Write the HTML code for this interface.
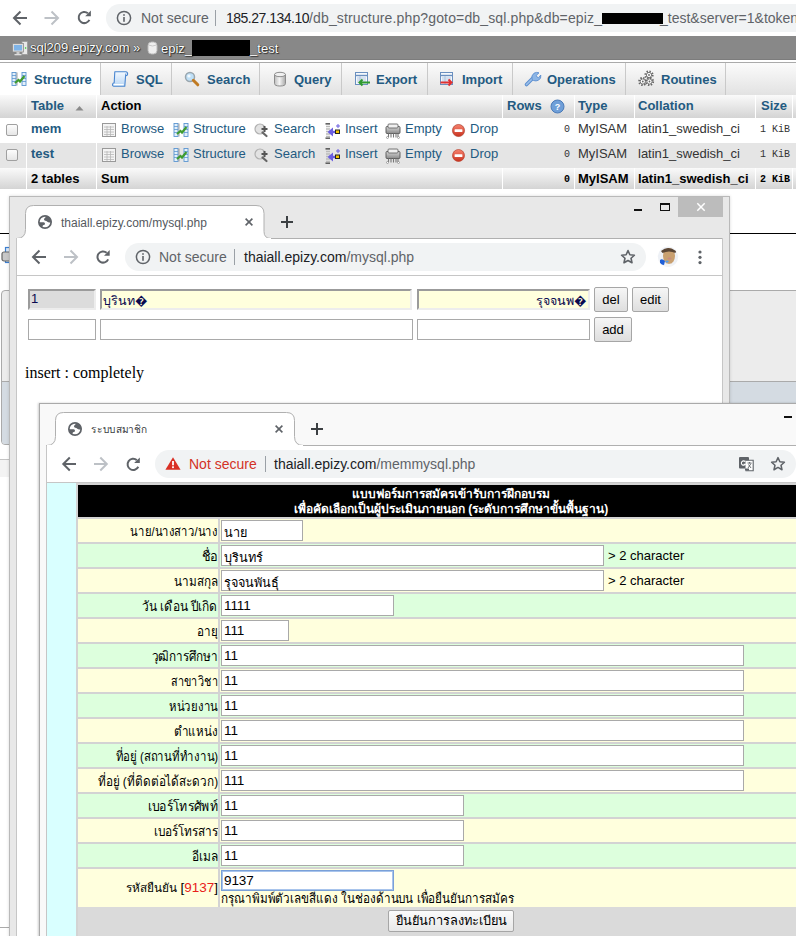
<!DOCTYPE html>
<html><head><meta charset="utf-8">
<style>
*{box-sizing:border-box;margin:0;padding:0}
html,body{width:796px;height:936px;overflow:hidden;background:#fff;font-family:"Liberation Sans",sans-serif;position:relative}
.a{position:absolute}
.t{position:absolute;white-space:nowrap;line-height:16px}
svg{position:absolute;overflow:visible}
.pill{position:absolute;background:#f1f3f4;border-radius:15px}
.lnk{color:#235a81}
.tab{position:absolute;top:0;height:32px;border-right:1px solid #c9c9c9;color:#235a81;font-size:13px;font-weight:bold}
.th{position:absolute;top:0;height:23px;border-right:1px solid #fff;font-size:13px;font-weight:bold;color:#000}
.row{position:absolute;left:0;width:796px;height:25px;font-size:13px}
.mono{font-family:"Liberation Mono",monospace;font-size:10px}
.inp{position:absolute;background:#fff;border:1px solid #a9a9a9;font-size:13px;line-height:18px;padding-left:2px;white-space:nowrap;overflow:hidden}
.btn{position:absolute;background:linear-gradient(#f6f6f6,#dedede);border:1px solid #a6a6a6;border-radius:2px;font-size:13px;text-align:center;line-height:24px;color:#000}
.fr{position:absolute;left:77px;width:760px;height:23px}
.lab{position:absolute;right:578px;top:3px;font-size:12px;white-space:nowrap;text-align:right}
.fi{position:absolute;left:221px;background:#fff;border:1px solid #a9a9a9;height:21px;font-size:13.5px;letter-spacing:-0.1px;line-height:19px;padding-left:2px;white-space:nowrap}
.th3{font-size:11.8px;line-height:16px;color:#000}
.y{background:#ffffdd}.g{background:#ddffdd}
</style></head><body>

<!-- ============ WINDOW 1 : phpMyAdmin ============ -->
<div class="a" style="left:0;top:0;width:796px;height:36px;background:#fff">
  <svg style="left:0;top:0" width="110" height="36" viewBox="0 0 110 36">
    <g fill="none" stroke="#5f6368" stroke-width="2"><path d="M27 18H14.5M20.5 11.5L14 18L20.5 24.5"/></g>
    <g fill="none" stroke="#bdc1c6" stroke-width="2"><path d="M44.5 18H57.5M51.5 11.5L58 18L51.5 24.5"/></g>
    <g fill="none" stroke="#5f6368" stroke-width="2"><path d="M87.90 13.21A5.6 5.6 0 1 0 89.38 19.87"/></g>
    <path d="M90.90 10.50L90.90 16.20L85.20 16.20Z" fill="#5f6368"/>
  </svg>
  <div class="pill" style="left:106px;top:4px;width:720px;height:28px;border-radius:14px"></div>
  <svg style="left:116px;top:10px" width="16" height="16" viewBox="0 0 16 16"><circle cx="8" cy="8" r="6.6" fill="none" stroke="#5f6368" stroke-width="1.5"/><rect x="7.2" y="7" width="1.6" height="4.8" fill="#5f6368"/><rect x="7.2" y="4.2" width="1.6" height="1.6" fill="#5f6368"/></svg>
  <div class="t" style="left:141px;top:10px;font-size:14px;color:#5f6368">Not secure</div>
  <div class="a" style="left:215px;top:10px;width:1px;height:16px;background:#9aa0a6"></div>
  <div class="t" style="left:226px;top:10px;font-size:14px;color:#202124;letter-spacing:-0.5px">185.27.134.10</div>
  <div class="t" style="left:309px;top:10px;font-size:14px;color:#5f6368;letter-spacing:0.14px">/db_structure.php?goto=db_sql.php&amp;db=epiz_</div>
  <div class="a" style="left:602px;top:13px;width:61px;height:11px;background:#000"></div>
  <div class="t" style="left:660px;top:10px;font-size:14px;color:#5f6368">_test&amp;server=1&amp;token</div>
</div>

<div class="a" style="left:0;top:36px;width:796px;height:24px;background:#888;border-bottom:1px solid #7c7c7c;color:#fff;font-size:13px;text-shadow:0 0 1px #000,1px 1px 1px #333">
  <svg style="left:12px;top:5px" width="16" height="16" viewBox="0 0 16 16"><rect x="10" y="0.5" width="5.5" height="13" fill="#e8e8e8" stroke="#9a9a9a" stroke-width=".8"/><circle cx="13.6" cy="7" r=".8" fill="#2c2"/><rect x="0.5" y="2.5" width="11" height="8.5" fill="#dcdcdc" stroke="#8c8c8c" stroke-width=".8"/><rect x="2" y="4" width="8" height="5.5" fill="#7fb4e8"/><rect x="4.5" y="11" width="3" height="2" fill="#ccc"/><rect x="2.5" y="13" width="7" height="1.3" fill="#ddd"/></svg>
  <div class="t" style="left:30px;top:4px">sql209.epizy.com »</div>
  <svg style="left:147px;top:5px" width="11" height="14" viewBox="0 0 11 14"><rect x="1" y="1" width="9" height="12" rx="3.5" fill="#eee" stroke="#b8b8b8"/><path d="M1.5 4Q5.5 6 9.5 4" fill="none" stroke="#c8c8c8"/></svg>
  <div class="t" style="left:161px;top:4px">epiz_<span style="display:inline-block;width:58px;height:16px;background:#000;vertical-align:-3px"></span>_test</div>
</div>
<div class="a" style="left:0;top:60px;width:796px;height:2px;background:#fff"></div>

<div class="a" style="left:0;top:62px;width:796px;height:33px;background:linear-gradient(#fbfbfb,#e2e2e2);border-top:1px solid #aaa">
  <div class="tab" style="left:0;width:101px;background:#fff;height:32px"></div>
  <div class="tab" style="left:100px;width:72px"></div>
  <div class="tab" style="left:171px;width:89px"></div>
  <div class="tab" style="left:259px;width:83px"></div>
  <div class="tab" style="left:341px;width:87px"></div>
  <div class="tab" style="left:427px;width:86px"></div>
  <div class="tab" style="left:512px;width:114px"></div>
  <div class="tab" style="left:625px;width:101px"></div>
  <div class="t" style="left:34px;top:9px;font-size:13px;font-weight:bold;color:#235a81">Structure</div>
  <div class="t" style="left:136px;top:9px;font-size:13px;font-weight:bold;color:#235a81">SQL</div>
  <div class="t" style="left:207px;top:9px;font-size:13px;font-weight:bold;color:#235a81">Search</div>
  <div class="t" style="left:294px;top:9px;font-size:13px;font-weight:bold;color:#235a81">Query</div>
  <div class="t" style="left:376px;top:9px;font-size:13px;font-weight:bold;color:#235a81">Export</div>
  <div class="t" style="left:462px;top:9px;font-size:13px;font-weight:bold;color:#235a81">Import</div>
  <div class="t" style="left:547px;top:9px;font-size:13px;font-weight:bold;color:#235a81">Operations</div>
  <div class="t" style="left:661px;top:9px;font-size:13px;font-weight:bold;color:#235a81">Routines</div>
  <!-- tab icons -->
  <svg style="left:11px;top:8px" width="16" height="16" viewBox="0 0 16 16"><rect x="1" y="1.5" width="4" height="13" fill="#e4f0fa" stroke="#5b95d0" stroke-width=".9"/><path d="M1 4.5H5M1 7.5H5M1 10.5H5" stroke="#5b95d0" stroke-width=".8"/><rect x="11" y="1.5" width="4" height="13" fill="#e4f0fa" stroke="#5b95d0" stroke-width=".9"/><path d="M11 4.5H15M11 7.5H15M11 10.5H15" stroke="#5b95d0" stroke-width=".8"/><path d="M6 1.5V14.5" stroke="#8a8a8a" stroke-width=".8"/><path d="M4 12L7.5 9L9 10.5L13.5 5" fill="none" stroke="#3f9b2f" stroke-width="2.2"/></svg>
  <svg style="left:112px;top:8px" width="17" height="17" viewBox="0 0 17 17"><defs><linearGradient id="sqg" x1="0" y1="0" x2="0" y2="1"><stop offset="0" stop-color="#f4f9ff"/><stop offset="1" stop-color="#b8d6f4"/></linearGradient></defs><path d="M2.8 0.8L13.8 0.8Q15.8 1 15.6 3.2Q15.4 4.8 13.6 4.6L12.8 15.2L1.6 15.2Q0.2 15 0.6 13.2Q1 11.8 2.2 11.8Z" fill="url(#sqg)" stroke="#4a86d0" stroke-width="1.1" stroke-linejoin="round"/><path d="M1.8 12.9H11.7L11.5 14.3H1.5Z" fill="#fff"/><path d="M13.6 4.6L13.8 2.5" stroke="#4a86d0" stroke-width=".9"/></svg>
  <svg style="left:184px;top:8px" width="16" height="16" viewBox="0 0 16 16"><circle cx="6" cy="6" r="4.5" fill="#bfe0f7" stroke="#9aa6ae" stroke-width="1.5"/><circle cx="5" cy="5" r="1.6" fill="#f2f9ff"/><path d="M9.3 9.3L13.8 13.8" stroke="#c07a22" stroke-width="3" stroke-linecap="round"/></svg>
  <svg style="left:273px;top:8px" width="14" height="16" viewBox="0 0 14 16"><defs><linearGradient id="cyl" x1="0" x2="1"><stop offset="0" stop-color="#bdbdbd"/><stop offset=".45" stop-color="#f4f4f4"/><stop offset="1" stop-color="#a8a8a8"/></linearGradient></defs><path d="M1.5 3.5V12.5Q1.5 15 7 15Q12.5 15 12.5 12.5V3.5" fill="url(#cyl)" stroke="#8c8c8c"/><ellipse cx="7" cy="3.5" rx="5.5" ry="2.2" fill="#f0f0f0" stroke="#8c8c8c"/></svg>
  <svg style="left:354px;top:8px" width="17" height="16" viewBox="0 0 17 16"><rect x="1.5" y="1.5" width="12" height="12" fill="#f4f8fc" stroke="#6a8fbf"/><path d="M1.5 4.5H13.5" stroke="#6a8fbf" stroke-width="1.4"/><path d="M3 7H12M3 9H12M3 11H12M6 5V13" stroke="#9bb5d6" stroke-width=".7"/><path d="M16 11.5H5.5M8.5 8.5L5.5 11.5L8.5 14.5" fill="none" stroke="#2f9a2f" stroke-width="2"/></svg>
  <svg style="left:439px;top:8px" width="17" height="16" viewBox="0 0 17 16"><rect x="1.5" y="1.5" width="12" height="12" fill="#f4f8fc" stroke="#6a8fbf"/><path d="M1.5 4.5H13.5" stroke="#6a8fbf" stroke-width="1.4"/><path d="M3 7H12M3 9H12M3 11H12M6 5V13" stroke="#9bb5d6" stroke-width=".7"/><path d="M1.5 11.5H12.5M9.5 8.5L12.5 11.5L9.5 14.5" fill="none" stroke="#e03030" stroke-width="2"/></svg>
  <svg style="left:524px;top:8px" width="17" height="16" viewBox="0 0 17 16"><path d="M2.5 13.5L9 7" stroke="#5d8fcf" stroke-width="3.6" stroke-linecap="round"/><path d="M2.5 13.5L9 7" stroke="#9cc0ea" stroke-width="1.6" stroke-linecap="round"/><path d="M8 8.5Q7 4.5 10 2.2Q12.5 0.8 15 1.8L12.2 4.5L13 6L14.5 6.8L16.8 4Q17.5 7.5 14.5 9.2Q12 10.5 9.5 9.5Z" fill="#8db6e6" stroke="#5d8fcf" stroke-width=".9"/></svg>
  <svg style="left:638px;top:7px" width="17" height="17" viewBox="0 0 17 17"><circle cx="11" cy="5" r="3.6" fill="#fff" stroke="#666" stroke-width="2" stroke-dasharray="1.4 1.42"/><circle cx="11" cy="5" r="2.6" fill="#fff" stroke="#666" stroke-width=".9"/><circle cx="11" cy="5" r="0.9" fill="#666"/><circle cx="4.8" cy="11.5" r="3.6" fill="#fff" stroke="#666" stroke-width="2" stroke-dasharray="1.4 1.42"/><circle cx="4.8" cy="11.5" r="2.6" fill="#fff" stroke="#666" stroke-width=".9"/><circle cx="4.8" cy="11.5" r="0.9" fill="#666"/><circle cx="11.5" cy="11.5" r="3.6" fill="#fff" stroke="#666" stroke-width="2" stroke-dasharray="1.4 1.42"/><circle cx="11.5" cy="11.5" r="2.6" fill="#fff" stroke="#666" stroke-width=".9"/><circle cx="11.5" cy="11.5" r="0.9" fill="#666"/></svg>
</div>

<!-- table -->
<div class="a" style="left:0;top:95px;width:796px;height:23px;background:linear-gradient(#fafafa,#d4d4d4)">
  <div class="th" style="left:0;width:27px"></div>
  <div class="th" style="left:26px;width:71px"></div>
  <div class="th" style="left:96px;width:407px"></div>
  <div class="th" style="left:502px;width:73px"></div>
  <div class="th" style="left:574px;width:61px"></div>
  <div class="th" style="left:634px;width:122px"></div>
  <div class="th" style="left:755px;width:38px"></div>
  <div class="t" style="left:31px;top:3px;font-size:13px;font-weight:bold;color:#235a81">Table</div>
  <svg style="left:75px;top:10px" width="9" height="6" viewBox="0 0 9 6"><path d="M0.5 5.5L4.5 1L8.5 5.5Z" fill="#8a8a8a"/></svg>
  <div class="t" style="left:101px;top:3px;font-size:13px;font-weight:bold;color:#000">Action</div>
  <div class="t" style="left:507px;top:3px;font-size:13px;font-weight:bold;color:#235a81">Rows</div>
  <svg style="left:550px;top:4px" width="15" height="15" viewBox="0 0 15 15"><circle cx="7.5" cy="7.5" r="6.5" fill="#6f9fd8" stroke="#4a7ab8"/><text x="7.5" y="11" font-size="9" font-weight="bold" text-anchor="middle" fill="#fff" font-family="Liberation Sans">?</text></svg>
  <div class="t" style="left:578px;top:3px;font-size:13px;font-weight:bold;color:#235a81">Type</div>
  <div class="t" style="left:638px;top:3px;font-size:13px;font-weight:bold;color:#235a81">Collation</div>
  <div class="t" style="left:761px;top:3px;font-size:13px;font-weight:bold;color:#235a81">Size</div>
</div>

<div class="row" style="top:118px;background:#fff"></div>
<div class="row" style="top:143px;background:#e5e5e5"></div>
<div class="row" style="top:168px;height:21px;background:linear-gradient(#fafafa,#d4d4d4)"></div>
<!-- column separators in rows -->
<div class="a" style="left:26px;top:118px;width:1px;height:71px;background:#fff"></div>
<div class="a" style="left:96px;top:118px;width:1px;height:71px;background:#fff"></div>
<div class="a" style="left:502px;top:168px;width:1px;height:21px;background:#fff"></div>
<div class="a" style="left:574px;top:168px;width:1px;height:21px;background:#fff"></div>
<div class="a" style="left:634px;top:168px;width:1px;height:21px;background:#fff"></div>
<div class="a" style="left:755px;top:168px;width:1px;height:21px;background:#fff"></div>
<div class="a" style="left:792px;top:168px;width:1px;height:21px;background:#fff"></div>

<div class="a" style="left:0;top:118px;width:796px;height:25px">
  <div class="a" style="left:6px;top:6px;width:12px;height:12px;border:1px solid #a0a0a0;border-radius:2px;background:linear-gradient(#fdfdfd,#e6e6e6)"></div>
  <div class="t" style="left:31px;top:3px;font-size:13px;font-weight:bold;color:#235a81">mem</div>
  <svg style="left:102px;top:5px" width="14" height="14" viewBox="0 0 14 14"><rect x=".5" y=".5" width="13" height="13" fill="#f4f4f4" stroke="#999"/><path d="M2 4H12M2 6.5H12M2 9H12M2 11.5H12M5 3V13M8.5 3V13" stroke="#b8b8b8" stroke-width=".8"/></svg>
  <div class="t lnk" style="left:121px;top:3px;font-size:13px">Browse</div>
  <svg style="left:173px;top:4px" width="16" height="16" viewBox="0 0 16 16"><rect x="1" y="1.5" width="4" height="13" fill="#e4f0fa" stroke="#5b95d0" stroke-width=".9"/><path d="M1 4.5H5M1 7.5H5M1 10.5H5" stroke="#5b95d0" stroke-width=".8"/><rect x="11" y="1.5" width="4" height="13" fill="#e4f0fa" stroke="#5b95d0" stroke-width=".9"/><path d="M11 4.5H15M11 7.5H15M11 10.5H15" stroke="#5b95d0" stroke-width=".8"/><path d="M6 1.5V14.5" stroke="#8a8a8a" stroke-width=".8"/><path d="M4 12L7.5 9L9 10.5L13.5 5" fill="none" stroke="#3f9b2f" stroke-width="2.2"/></svg>
  <div class="t lnk" style="left:193px;top:3px;font-size:13px">Structure</div>
  <svg style="left:254px;top:5px" width="15" height="14" viewBox="0 0 15 14"><circle cx="6" cy="6" r="5" fill="#e2e2e2" stroke="#b0b0b0" stroke-width="1.2"/><path d="M8.5 9.5L12.5 13" stroke="#666" stroke-width="2.2" stroke-linecap="round"/><path d="M10.5 3V9M7.5 6H13.5" stroke="#555" stroke-width="2"/></svg>
  <div class="t lnk" style="left:274px;top:3px;font-size:13px">Search</div>
  <svg style="left:325px;top:5px" width="16" height="16" viewBox="0 0 16 16"><path d="M0.5 0.8H5M0.5 15.2H5" stroke="#333" stroke-width="1.2"/><path d="M1 3.5H5M1 6H5M1 8.5H5M1 11H5M1 13.5H5" stroke="#bbb" stroke-width="1.3"/><path d="M4 9H11" stroke="#6b5ee0" stroke-width="2.4"/><path d="M2.5 9L8 4.5V13.5Z" fill="#6b5ee0"/><rect x="10.5" y="7" width="4" height="3.5" fill="#f5c400" stroke="#222" stroke-width="1"/><path d="M13 1V5M11 3H15" stroke="#6b5ee0" stroke-width="1"/></svg>
  <div class="t lnk" style="left:345px;top:3px;font-size:13px">Insert</div>
  <svg style="left:385px;top:5px" width="16" height="16" viewBox="0 0 16 16"><defs><linearGradient id="shg" x1="0" y1="0" x2="0" y2="1"><stop offset="0" stop-color="#d8d8d8"/><stop offset="1" stop-color="#8a8a8a"/></linearGradient></defs><rect x="1" y="3.5" width="14" height="7" rx="1" fill="url(#shg)" stroke="#555" stroke-width=".9"/><rect x="3" y="1" width="10" height="4" rx="1" fill="#f0f0f0" stroke="#666" stroke-width=".9"/><path d="M3.5 10.5V14M6 10.5V14.5M8.5 10.5V14.5M11 10.5V14.5M13 10.5V14" stroke="#777" stroke-width="1.1"/><circle cx="2.5" cy="14.5" r="1" fill="#fff" stroke="#777" stroke-width=".6"/><circle cx="13.5" cy="14.5" r="1" fill="#fff" stroke="#777" stroke-width=".6"/></svg>
  <div class="t lnk" style="left:405px;top:3px;font-size:13px">Empty</div>
  <svg style="left:451px;top:5px" width="15" height="15" viewBox="0 0 15 15"><defs><linearGradient id="drg" x1="0" y1="0" x2="0" y2="1"><stop offset="0" stop-color="#f7836f"/><stop offset="1" stop-color="#c8321f"/></linearGradient></defs><circle cx="7.5" cy="7.5" r="6.8" fill="#e9e9e9"/><circle cx="7.5" cy="7.5" r="6" fill="url(#drg)" stroke="#b8402e" stroke-width=".7"/><rect x="3.6" y="6.2" width="7.8" height="2.7" rx=".5" fill="#fff"/></svg>
  <div class="t lnk" style="left:470px;top:3px;font-size:13px">Drop</div>
  <div class="t mono" style="left:564px;top:3.5px;color:#333">0</div>
  <div class="t" style="left:578px;top:3px;font-size:13px;color:#333">MyISAM</div>
  <div class="t" style="left:638px;top:3px;font-size:13px;color:#333">latin1_swedish_ci</div>
  <div class="t mono" style="left:760px;top:3.5px;color:#333">1 KiB</div>
</div>
<div class="a" style="left:0;top:143px;width:796px;height:25px">
  <div class="a" style="left:6px;top:6px;width:12px;height:12px;border:1px solid #a0a0a0;border-radius:2px;background:linear-gradient(#fdfdfd,#e6e6e6)"></div>
  <div class="t" style="left:31px;top:3px;font-size:13px;font-weight:bold;color:#235a81">test</div>
  <svg style="left:102px;top:5px" width="14" height="14" viewBox="0 0 14 14"><rect x=".5" y=".5" width="13" height="13" fill="#f4f4f4" stroke="#999"/><path d="M2 4H12M2 6.5H12M2 9H12M2 11.5H12M5 3V13M8.5 3V13" stroke="#b8b8b8" stroke-width=".8"/></svg>
  <div class="t lnk" style="left:121px;top:3px;font-size:13px">Browse</div>
  <svg style="left:173px;top:4px" width="16" height="16" viewBox="0 0 16 16"><rect x="1" y="1.5" width="4" height="13" fill="#e4f0fa" stroke="#5b95d0" stroke-width=".9"/><path d="M1 4.5H5M1 7.5H5M1 10.5H5" stroke="#5b95d0" stroke-width=".8"/><rect x="11" y="1.5" width="4" height="13" fill="#e4f0fa" stroke="#5b95d0" stroke-width=".9"/><path d="M11 4.5H15M11 7.5H15M11 10.5H15" stroke="#5b95d0" stroke-width=".8"/><path d="M6 1.5V14.5" stroke="#8a8a8a" stroke-width=".8"/><path d="M4 12L7.5 9L9 10.5L13.5 5" fill="none" stroke="#3f9b2f" stroke-width="2.2"/></svg>
  <div class="t lnk" style="left:193px;top:3px;font-size:13px">Structure</div>
  <svg style="left:254px;top:5px" width="15" height="14" viewBox="0 0 15 14"><circle cx="6" cy="6" r="5" fill="#e2e2e2" stroke="#b0b0b0" stroke-width="1.2"/><path d="M8.5 9.5L12.5 13" stroke="#666" stroke-width="2.2" stroke-linecap="round"/><path d="M10.5 3V9M7.5 6H13.5" stroke="#555" stroke-width="2"/></svg>
  <div class="t lnk" style="left:274px;top:3px;font-size:13px">Search</div>
  <svg style="left:325px;top:5px" width="16" height="16" viewBox="0 0 16 16"><path d="M0.5 0.8H5M0.5 15.2H5" stroke="#333" stroke-width="1.2"/><path d="M1 3.5H5M1 6H5M1 8.5H5M1 11H5M1 13.5H5" stroke="#bbb" stroke-width="1.3"/><path d="M4 9H11" stroke="#6b5ee0" stroke-width="2.4"/><path d="M2.5 9L8 4.5V13.5Z" fill="#6b5ee0"/><rect x="10.5" y="7" width="4" height="3.5" fill="#f5c400" stroke="#222" stroke-width="1"/><path d="M13 1V5M11 3H15" stroke="#6b5ee0" stroke-width="1"/></svg>
  <div class="t lnk" style="left:345px;top:3px;font-size:13px">Insert</div>
  <svg style="left:385px;top:5px" width="16" height="16" viewBox="0 0 16 16"><defs><linearGradient id="shg" x1="0" y1="0" x2="0" y2="1"><stop offset="0" stop-color="#d8d8d8"/><stop offset="1" stop-color="#8a8a8a"/></linearGradient></defs><rect x="1" y="3.5" width="14" height="7" rx="1" fill="url(#shg)" stroke="#555" stroke-width=".9"/><rect x="3" y="1" width="10" height="4" rx="1" fill="#f0f0f0" stroke="#666" stroke-width=".9"/><path d="M3.5 10.5V14M6 10.5V14.5M8.5 10.5V14.5M11 10.5V14.5M13 10.5V14" stroke="#777" stroke-width="1.1"/><circle cx="2.5" cy="14.5" r="1" fill="#fff" stroke="#777" stroke-width=".6"/><circle cx="13.5" cy="14.5" r="1" fill="#fff" stroke="#777" stroke-width=".6"/></svg>
  <div class="t lnk" style="left:405px;top:3px;font-size:13px">Empty</div>
  <svg style="left:451px;top:5px" width="15" height="15" viewBox="0 0 15 15"><defs><linearGradient id="drg" x1="0" y1="0" x2="0" y2="1"><stop offset="0" stop-color="#f7836f"/><stop offset="1" stop-color="#c8321f"/></linearGradient></defs><circle cx="7.5" cy="7.5" r="6.8" fill="#e9e9e9"/><circle cx="7.5" cy="7.5" r="6" fill="url(#drg)" stroke="#b8402e" stroke-width=".7"/><rect x="3.6" y="6.2" width="7.8" height="2.7" rx=".5" fill="#fff"/></svg>
  <div class="t lnk" style="left:470px;top:3px;font-size:13px">Drop</div>
  <div class="t mono" style="left:564px;top:3.5px;color:#333">0</div>
  <div class="t" style="left:578px;top:3px;font-size:13px;color:#333">MyISAM</div>
  <div class="t" style="left:638px;top:3px;font-size:13px;color:#333">latin1_swedish_ci</div>
  <div class="t mono" style="left:760px;top:3.5px;color:#333">1 KiB</div>
</div>
<div class="a" style="left:0;top:168px;width:796px;height:21px">
  <div class="t" style="left:31px;top:3px;font-size:13px;font-weight:bold">2 tables</div>
  <div class="t" style="left:101px;top:3px;font-size:13px;font-weight:bold">Sum</div>
  <div class="t mono" style="left:564px;top:4px;font-weight:bold">0</div>
  <div class="t" style="left:578px;top:3px;font-size:13px;font-weight:bold">MyISAM</div>
  <div class="t" style="left:638px;top:3px;font-size:13px;font-weight:bold">latin1_swedish_ci</div>
  <div class="t mono" style="left:760px;top:4px;font-weight:bold">2 KiB</div>
</div>


<!-- background page below table -->
<div class="a" style="left:0;top:233px;width:796px;height:1px;background:#000;box-shadow:0 0 0.6px #000"></div>
<div class="a" style="left:700px;top:290px;width:96px;height:91px;background:#ececec;border-top:1px solid #aaa"></div>
<div class="a" style="left:700px;top:381px;width:96px;height:22px;background:#d4dbe2;border-top:1px solid #aaa"></div>
<div class="a" style="left:1px;top:290px;width:20px;height:155px;background:#ececec;border:1px solid #aaa;border-radius:4px;overflow:hidden"><div class="a" style="left:0;top:90px;width:20px;height:70px;background:#d4dbe2;border-top:1px solid #aaa"></div></div>
<div class="a" style="left:0;top:459px;width:20px;height:18px;background:#f3f3f3;border-top:1px solid #c4c4c4"></div>
<div class="a" style="left:0;top:927px;width:20px;height:1px;background:#aaa"></div>
<svg style="left:1px;top:246px" width="12" height="18" viewBox="0 0 12 18"><rect x="4.5" y="1.5" width="7" height="15" fill="#dbe9f9" stroke="#3d7fd0" stroke-width="1.2"/><rect x="1" y="6" width="10" height="9" rx="2" fill="#c8c8c8" stroke="#666" stroke-width="1.2"/></svg>

<!-- ============ WINDOW 2 ============ -->
<div class="a" style="left:9px;top:196px;width:721px;height:760px;background:#e8e8e8;border:1px solid #b9b9b9;box-shadow:0 0 3px rgba(0,0,0,.15)"></div>
<!-- tab -->
<svg style="left:9px;top:196px" width="300" height="45" viewBox="0 0 300 45">
  <path d="M7.5 42.5Q16.5 42.5 16.5 33.5V17.5Q16.5 9.5 24.5 9.5H247Q255 9.5 255 17.5V35.5Q255 42.5 262 42.5" fill="#fff" stroke="#b0b0b0" stroke-width="1"/>
  <rect x="8" y="42" width="254" height="4" fill="#fff"/>
</svg>
<div class="a" style="left:16px;top:238px;width:707px;height:720px;background:#fff;border-top:1px solid #b0b0b0"></div>
<div class="a" style="left:16px;top:238px;width:1px;height:720px;background:#c6c6c6"></div>
<div class="a" style="left:722px;top:238px;width:1px;height:720px;background:#c6c6c6"></div>
<div class="a" style="left:17px;top:238px;width:254px;height:3px;background:#fff"></div>
<svg style="left:37px;top:214px" width="16" height="16" viewBox="0 0 16 16"><defs><clipPath id="gl1"><circle cx="8" cy="8" r="6.4"/></clipPath></defs><circle cx="8" cy="8" r="6.15" fill="none" stroke="#5f6368" stroke-width="1.7"/><g clip-path="url(#gl1)" fill="#5f6368"><path d="M8.8 1V3Q7 4 7 5.5Q7 6.6 8.2 6.8Q9.5 7 10.3 7.8Q11 8.6 12.7 8.55H15V1Z"/><path d="M1 8.3H6.6Q8.2 8.5 8 9.9Q7.8 10.7 6.6 10.9Q5.6 11.2 5.5 12.5L5 15H1Z"/></g></svg>
<div class="t" style="left:61px;top:215px;font-size:12px;color:#55595e">thaiall.epizy.com/mysql.php</div>
<svg style="left:245px;top:218px" width="8" height="8" viewBox="0 0 8 8"><path d="M0.6 0.6L7.4 7.4M7.4 0.6L0.6 7.4" stroke="#5f6368" stroke-width="1.6"/></svg>
<svg style="left:281px;top:216px" width="12" height="12" viewBox="0 0 12 12"><path d="M6 0V12M0 6H12" stroke="#3c4043" stroke-width="2"/></svg>
<div class="a" style="left:634px;top:209px;width:8px;height:2px;background:#111"></div>
<div class="a" style="left:660px;top:203px;width:10px;height:8px;border:1px solid #111;border-top-width:2px"></div>
<div class="a" style="left:678px;top:197px;width:45px;height:20px;background:#bcbcbc"></div>
<svg style="left:697px;top:203px" width="8" height="8" viewBox="0 0 8 8"><path d="M0.3 0.3L7.7 7.7M7.7 0.3L0.3 7.7" stroke="#fff" stroke-width="1.5"/></svg>
<!-- toolbar -->
<svg style="left:16px;top:238px" width="110" height="37" viewBox="0 0 110 37">
  <g fill="none" stroke="#5f6368" stroke-width="2"><path d="M30 19H17.5M23.5 12.5L17 19L23.5 25.5"/></g>
  <g fill="none" stroke="#bdc1c6" stroke-width="2"><path d="M48 19H60.5M54.5 12.5L61 19L54.5 25.5"/></g>
  <g fill="none" stroke="#5f6368" stroke-width="2"><path d="M90.70 14.71A5.6 5.6 0 1 0 92.18 21.37"/></g>
  <path d="M93.70 12.00L93.70 17.70L88.00 17.70Z" fill="#5f6368"/>
</svg>
<div class="pill" style="left:125px;top:243px;width:521px;height:28px;border-radius:14px"></div>
<svg style="left:135px;top:249px" width="16" height="16" viewBox="0 0 16 16"><circle cx="8" cy="8" r="6.6" fill="none" stroke="#5f6368" stroke-width="1.5"/><rect x="7.2" y="7" width="1.6" height="4.8" fill="#5f6368"/><rect x="7.2" y="4.2" width="1.6" height="1.6" fill="#5f6368"/></svg>
<div class="t" style="left:159px;top:249px;font-size:14px;color:#5f6368">Not secure</div>
<div class="a" style="left:234px;top:249px;width:1px;height:16px;background:#9aa0a6"></div>
<div class="t" style="left:244px;top:249px;font-size:14px;color:#5f6368"><span style="color:#202124">thaiall.epizy.com</span>/mysql.php</div>
<svg style="left:620px;top:249px" width="16" height="16" viewBox="0 0 18 18"><path d="M9 1.8L11.1 6.5L16.2 7L12.4 10.4L13.5 15.5L9 12.9L4.5 15.5L5.6 10.4L1.8 7L6.9 6.5Z" fill="none" stroke="#5f6368" stroke-width="1.8" stroke-linejoin="round"/></svg>
<svg style="left:657px;top:246px" width="22" height="22" viewBox="0 0 22 22"><defs><clipPath id="av"><circle cx="11" cy="10.7" r="10.2"/></clipPath></defs><g clip-path="url(#av)"><rect width="22" height="22" fill="#eef1f6"/><ellipse cx="12" cy="10" rx="6" ry="8" fill="#c9a070"/><path d="M4 5Q11 -1 19 5L18.5 7Q12 4 5.5 7Z" fill="#5a4636"/><ellipse cx="12.5" cy="12.5" rx="2" ry="1" fill="#c98a80"/><path d="M3 14Q5 12 8 15L7 19Q4 19 3 17Z" fill="#1f5fd8"/><path d="M8 15Q10 14 12 15L10 17Z" fill="#5aa0e8"/><path d="M5 22Q8 17 12 18Q16 17 19 22Z" fill="#f4f4f4"/></g></svg>
<svg style="left:698px;top:250px" width="4" height="14" viewBox="0 0 4 14"><circle cx="2" cy="2" r="1.6" fill="#5f6368"/><circle cx="2" cy="7.3" r="1.6" fill="#5f6368"/><circle cx="2" cy="12.6" r="1.6" fill="#5f6368"/></svg>
<div class="a" style="left:17px;top:275px;width:705px;height:1px;background:#c6c6c6"></div>
<!-- content -->
<div class="inp" style="left:28px;top:289px;width:68px;height:21px;background:#dcdcdc;border:2px solid;border-color:#9b9b9b #ededed #ededed #9b9b9b;color:#0a0a50;line-height:16px;padding-left:1px">1</div>
<div class="inp" style="left:100px;top:289px;width:312px;height:21px;background:#ffffdd;border:2px solid;border-color:#9b9b9b #ededed #ededed #9b9b9b;color:#0a0a50;line-height:17px;padding-left:1px;padding-top:2px;font-size:12.5px">บุรินท�</div>
<div class="inp" style="left:417px;top:289px;width:173px;height:21px;background:#ffffdd;border:2px solid;border-color:#9b9b9b #ededed #ededed #9b9b9b;color:#0a0a50;line-height:17px;text-align:right;padding-right:1px;padding-top:2px;font-size:12.5px">รุจจนพ�</div>
<div class="btn" style="left:594px;top:287px;width:34px;height:25px">del</div>
<div class="btn" style="left:632px;top:287px;width:37px;height:25px">edit</div>
<div class="inp" style="left:28px;top:319px;width:68px;height:21px"></div>
<div class="inp" style="left:100px;top:319px;width:313px;height:21px"></div>
<div class="inp" style="left:417px;top:319px;width:173px;height:21px"></div>
<div class="btn" style="left:594px;top:317px;width:38px;height:25px">add</div>
<div class="t" style="left:25px;top:363px;font-family:'Liberation Serif',serif;font-size:16px;line-height:20px;color:#000">insert : completely</div>


<!-- ============ WINDOW 3 ============ -->
<div class="a" style="left:39px;top:403px;width:800px;height:560px;background:#f9f9f9;border:1px solid #aaa;box-shadow:-1px 0 2px rgba(0,0,0,.2)"></div>
<svg style="left:38px;top:403px" width="300" height="45" viewBox="0 0 300 45">
  <path d="M8.5 42.5Q17.5 42.5 17.5 33.5V17.5Q17.5 9.5 25.5 9.5H248.5Q256.5 9.5 256.5 17.5V33.5Q256.5 42.5 265.5 42.5" fill="#fff" stroke="#b0b0b0" stroke-width="1"/>
</svg>
<div class="a" style="left:46px;top:445px;width:760px;height:520px;background:#fff;border-top:1px solid #b0b0b0;border-left:1px solid #c6c6c6"></div>
<div class="a" style="left:47px;top:445px;width:256px;height:3px;background:#fff"></div>
<svg style="left:67px;top:421px" width="16" height="16" viewBox="0 0 16 16"><defs><clipPath id="gl2"><circle cx="8" cy="8" r="6.4"/></clipPath></defs><circle cx="8" cy="8" r="6.15" fill="none" stroke="#5f6368" stroke-width="1.7"/><g clip-path="url(#gl2)" fill="#5f6368"><path d="M8.8 1V3Q7 4 7 5.5Q7 6.6 8.2 6.8Q9.5 7 10.3 7.8Q11 8.6 12.7 8.55H15V1Z"/><path d="M1 8.3H6.6Q8.2 8.5 8 9.9Q7.8 10.7 6.6 10.9Q5.6 11.2 5.5 12.5L5 15H1Z"/></g></svg>
<div class="t" style="left:91px;top:421px;font-size:10.5px;color:#3c4043;transform:scaleX(0.96);transform-origin:0 50%">ระบบสมาชิก</div>
<svg style="left:275px;top:425px" width="8" height="8" viewBox="0 0 8 8"><path d="M0.6 0.6L7.4 7.4M7.4 0.6L0.6 7.4" stroke="#5f6368" stroke-width="1.6"/></svg>
<svg style="left:311px;top:423px" width="12" height="12" viewBox="0 0 12 12"><path d="M6 0V12M0 6H12" stroke="#3c4043" stroke-width="2"/></svg>
<div class="a" style="left:784px;top:416px;width:8px;height:2px;background:#111"></div>
<svg style="left:46px;top:445px" width="110" height="37" viewBox="0 0 110 37">
  <g fill="none" stroke="#5f6368" stroke-width="2"><path d="M30 19H17.8M23.8 12.5L17.3 19L23.8 25.5"/></g>
  <g fill="none" stroke="#bdc1c6" stroke-width="2"><path d="M48 19H60.3M54.3 12.5L60.8 19L54.3 25.5"/></g>
  <g fill="none" stroke="#5f6368" stroke-width="2"><path d="M90.80 15.11A5.6 5.6 0 1 0 92.28 21.77"/></g>
  <path d="M93.80 12.40L93.80 18.10L88.10 18.10Z" fill="#5f6368"/>
</svg>
<div class="pill" style="left:155px;top:450px;width:641px;height:28px;border-radius:14px"></div>
<svg style="left:165px;top:457px" width="16" height="13" viewBox="0 0 16 13"><path d="M8 0.3L15.6 12.7H0.4Z" fill="#d93025"/><rect x="7.1" y="4" width="1.8" height="4.3" fill="#fff"/><rect x="7.1" y="9.3" width="1.8" height="1.8" fill="#fff"/></svg>
<div class="t" style="left:189px;top:456px;font-size:14px;color:#d33226">Not secure</div>
<div class="a" style="left:265px;top:456px;width:1px;height:16px;background:#9aa0a6"></div>
<div class="t" style="left:274px;top:456px;font-size:14px;color:#5f6368"><span style="color:#202124">thaiall.epizy.com</span>/memmysql.php</div>
<svg style="left:739px;top:457px" width="15" height="14" viewBox="0 0 15 14"><rect x="0" y="0" width="10" height="11.5" rx="1" fill="#5f6368"/><path d="M6.5 3.3H14.2V13.7H6.5" fill="#fff" stroke="#5f6368" stroke-width="1.1"/><path d="M6.2 4.6A2.2 2.2 0 1 0 6.4 7.3H4.6" fill="none" stroke="#fff" stroke-width="1.1"/><path d="M8.5 6H12.5M10.5 5V6.5M9 11L12 6.5M9.5 7.5L12 11" stroke="#5f6368" stroke-width=".9" fill="none"/><rect x="6" y="11.5" width="4" height="2" fill="#5f6368"/></svg>
<svg style="left:770px;top:456px" width="16" height="16" viewBox="0 0 18 18"><path d="M9 1.8L11.1 6.5L16.2 7L12.4 10.4L13.5 15.5L9 12.9L4.5 15.5L5.6 10.4L1.8 7L6.9 6.5Z" fill="none" stroke="#5f6368" stroke-width="1.7" stroke-linejoin="round"/></svg>
<div class="a" style="left:47px;top:482px;width:760px;height:1px;background:#c6c6c6"></div>
<!-- page -->
<div class="a" style="left:47px;top:483px;width:760px;height:460px;background:#d9ffff"></div>
<div class="a" style="left:76px;top:483px;width:760px;height:460px;background:#d3d3d3"></div>
<div class="a" style="left:78px;top:485px;width:760px;height:32px;background:#000"></div>
<div class="t" style="left:78px;width:746px;top:487px;text-align:center;color:#fff;font-size:12px;font-weight:bold;line-height:15px">แบบฟอร์มการสมัครเข้ารับการฝึกอบรม<br>เพื่อคัดเลือกเป็นผู้ประเมินภายนอก (ระดับการศึกษาขั้นพื้นฐาน)</div>
<div class="a" style="left:78px;top:519px;width:140px;height:23px;background:#ffffdd"></div><div class="a" style="left:220px;top:519px;width:600px;height:23px;background:#ffffdd"></div><div class="t th3" style="right:578px;top:523px;transform:scale(0.951,1.15);transform-origin:100% 8.5px">นาย/นางสาว/นาง</div><div class="fi" style="top:520px;width:82px;font-size:12.7px;letter-spacing:0;padding-top:3px">นาย</div>
<div class="a" style="left:78px;top:544px;width:140px;height:23px;background:#ddffdd"></div><div class="a" style="left:220px;top:544px;width:600px;height:23px;background:#ddffdd"></div><div class="t th3" style="right:578px;top:548px;transform:scale(1.077,1.15);transform-origin:100% 8.5px">ชื่อ</div><div class="fi" style="top:545px;width:383px;font-size:12.7px;letter-spacing:0;padding-top:3px">บุรินทร์</div><div class="t" style="left:608px;top:548px;font-size:13px;line-height:16px">> 2 character</div>
<div class="a" style="left:78px;top:569px;width:140px;height:23px;background:#ffffdd"></div><div class="a" style="left:220px;top:569px;width:600px;height:23px;background:#ffffdd"></div><div class="t th3" style="right:578px;top:573px;transform:scale(0.993,1.15);transform-origin:100% 8.5px">นามสกุล</div><div class="fi" style="top:570px;width:383px;font-size:12.7px;letter-spacing:0;padding-top:3px">รุจจนพันธุ์</div><div class="t" style="left:608px;top:573px;font-size:13px;line-height:16px">> 2 character</div>
<div class="a" style="left:78px;top:594px;width:140px;height:23px;background:#ddffdd"></div><div class="a" style="left:220px;top:594px;width:600px;height:23px;background:#ddffdd"></div><div class="t th3" style="right:578px;top:598px;transform:scale(1.015,1.15);transform-origin:100% 8.5px">วัน เดือน ปีเกิด</div><div class="fi" style="top:595px;width:173px">1111</div>
<div class="a" style="left:78px;top:619px;width:140px;height:23px;background:#ffffdd"></div><div class="a" style="left:220px;top:619px;width:600px;height:23px;background:#ffffdd"></div><div class="t th3" style="right:578px;top:623px;transform:scale(0.984,1.15);transform-origin:100% 8.5px">อายุ</div><div class="fi" style="top:620px;width:68px">111</div>
<div class="a" style="left:78px;top:644px;width:140px;height:23px;background:#ddffdd"></div><div class="a" style="left:220px;top:644px;width:600px;height:23px;background:#ddffdd"></div><div class="t th3" style="right:578px;top:648px;transform:scale(0.992,1.15);transform-origin:100% 8.5px">วุฒิการศึกษา</div><div class="fi" style="top:645px;width:523px">11</div>
<div class="a" style="left:78px;top:669px;width:140px;height:23px;background:#ffffdd"></div><div class="a" style="left:220px;top:669px;width:600px;height:23px;background:#ffffdd"></div><div class="t th3" style="right:578px;top:673px;transform:scale(0.916,1.15);transform-origin:100% 8.5px">สาขาวิชา</div><div class="fi" style="top:670px;width:523px">11</div>
<div class="a" style="left:78px;top:694px;width:140px;height:23px;background:#ddffdd"></div><div class="a" style="left:220px;top:694px;width:600px;height:23px;background:#ddffdd"></div><div class="t th3" style="right:578px;top:698px;transform:scale(0.964,1.15);transform-origin:100% 8.5px">หน่วยงาน</div><div class="fi" style="top:695px;width:523px">11</div>
<div class="a" style="left:78px;top:719px;width:140px;height:23px;background:#ffffdd"></div><div class="a" style="left:220px;top:719px;width:600px;height:23px;background:#ffffdd"></div><div class="t th3" style="right:578px;top:723px;transform:scale(0.984,1.15);transform-origin:100% 8.5px">ตำแหน่ง</div><div class="fi" style="top:720px;width:523px">11</div>
<div class="a" style="left:78px;top:744px;width:140px;height:23px;background:#ddffdd"></div><div class="a" style="left:220px;top:744px;width:600px;height:23px;background:#ddffdd"></div><div class="t th3" style="right:578px;top:748px;transform:scale(0.967,1.15);transform-origin:100% 8.5px">ที่อยู่ (สถานที่ทำงาน)</div><div class="fi" style="top:745px;width:523px">11</div>
<div class="a" style="left:78px;top:769px;width:140px;height:23px;background:#ffffdd"></div><div class="a" style="left:220px;top:769px;width:600px;height:23px;background:#ffffdd"></div><div class="t th3" style="right:578px;top:773px;transform:scale(0.995,1.15);transform-origin:100% 8.5px">ที่อยู่ (ที่ติดต่อได้สะดวก)</div><div class="fi" style="top:770px;width:523px">111</div>
<div class="a" style="left:78px;top:794px;width:140px;height:23px;background:#ddffdd"></div><div class="a" style="left:220px;top:794px;width:600px;height:23px;background:#ddffdd"></div><div class="t th3" style="right:578px;top:798px;transform:scale(1.045,1.15);transform-origin:100% 8.5px">เบอร์โทรศัพท์</div><div class="fi" style="top:795px;width:243px">11</div>
<div class="a" style="left:78px;top:819px;width:140px;height:23px;background:#ffffdd"></div><div class="a" style="left:220px;top:819px;width:600px;height:23px;background:#ffffdd"></div><div class="t th3" style="right:578px;top:823px;transform:scale(1.003,1.15);transform-origin:100% 8.5px">เบอร์โทรสาร</div><div class="fi" style="top:820px;width:243px">11</div>
<div class="a" style="left:78px;top:844px;width:140px;height:23px;background:#ddffdd"></div><div class="a" style="left:220px;top:844px;width:600px;height:23px;background:#ddffdd"></div><div class="t th3" style="right:578px;top:848px;transform:scale(1.013,1.15);transform-origin:100% 8.5px">อีเมล</div><div class="fi" style="top:845px;width:243px">11</div>

<div class="a" style="left:78px;top:869px;width:140px;height:38px;background:#ffffdd"></div>
<div class="a" style="left:220px;top:869px;width:600px;height:38px;background:#ffffdd"></div>
<div class="t th3" style="right:578px;top:880px">รหัสยืนยัน <span style="font-family:'Liberation Sans';font-size:13.5px">[<span style="color:#e8201a">9137</span>]</span></div>
<div class="fi" style="top:870px;width:173px;border:1px solid #7aa0d8;box-shadow:0 0 0 1px #a8c4ec inset">9137</div>
<div class="t th3" style="left:221px;top:892px;line-height:14px;transform:scale(0.99,1.12);transform-origin:0 8px">กรุณาพิมพ์ตัวเลขสีแดง ในช่องด้านบน เพื่อยืนยันการสมัคร</div>
<div class="a" style="left:78px;top:907px;width:760px;height:40px;background:#dadada"></div>
<div class="btn" style="left:388px;top:910px;width:126px;height:22px;font-size:12.8px;line-height:20px;background:linear-gradient(#fbfbfb,#e8e8e8)">ยืนยันการลงทะเบียน</div>

</body></html>
